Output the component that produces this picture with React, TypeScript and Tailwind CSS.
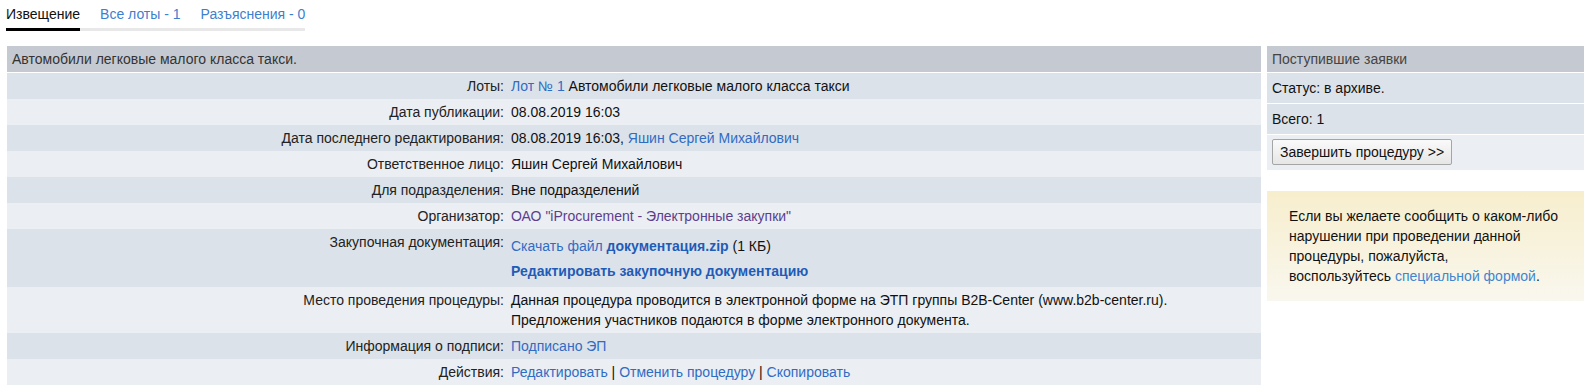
function Link({ children, className = "" }: { children: React.ReactNode; className?: string }) {
  return <a className={`text-[#2f6cc4] ${className}`}>{children}</a>;
}

function Row({
  label,
  dark,
  children,
}: {
  label: string;
  dark: boolean;
  children: React.ReactNode;
}) {
  return (
    <div className={`flex ${dark ? "bg-[#dce2e9]" : "bg-[#ebeef2]"}`}>
      <div className="w-[501px] shrink-0 py-[3px] pr-[4px] text-right text-[#222]">{label}</div>
      <div className="flex-1 py-[3px] pl-[3px] text-[#111]">{children}</div>
    </div>
  );
}

export default function App() {
  return (
    <div className="min-h-[392px] bg-white px-[6px] font-['Liberation_Sans',Arial,sans-serif] text-[14px] leading-[20px]">
      <div className="inline-flex gap-[20px] border-b-[3px] border-[#e8e8e8] pt-[4px]">
        <span className="-mb-[3px] border-b-[3px] border-black pb-[4px] text-[#111]">Извещение</span>
        <a className="pb-[4px] text-[#3d7fce]">Все лоты - 1</a>
        <a className="pb-[4px] text-[#3d7fce]">Разъяснения - 0</a>
      </div>

      <div className="mt-[15px] flex gap-[6px]">
        <div className="ml-[1px] flex-1">
          <div className="border-b border-white bg-[#c5cad2] px-[5px] py-[3px] text-[#333]">
            Автомобили легковые малого класса такси.
          </div>
          <Row label="Лоты:" dark>
            <Link>Лот № 1</Link> Автомобили легковые малого класса такси
          </Row>
          <Row label="Дата публикации:" dark={false}>
            08.08.2019 16:03
          </Row>
          <Row label="Дата последнего редактирования:" dark>
            08.08.2019 16:03, <Link>Яшин Сергей Михайлович</Link>
          </Row>
          <Row label="Ответственное лицо:" dark={false}>
            Яшин Сергей Михайлович
          </Row>
          <Row label="Для подразделения:" dark>
            Вне подразделений
          </Row>
          <Row label="Организатор:" dark={false}>
            <a className="text-[#5b3e8f]">ОАО "iProcurement - Электронные закупки"</a>
          </Row>
          <Row label="Закупочная документация:" dark>
            <div className="mt-[4px]">
              <Link>
                Скачать файл <b className="text-[#1f5cb8]">документация.zip</b>
              </Link>{" "}
              (1 КБ)
            </div>
            <div className="mb-[3px] mt-[5px]">
              <a className="font-bold text-[#1f5cb8]">Редактировать закупочную документацию</a>
            </div>
          </Row>
          <Row label="Место проведения процедуры:" dark={false}>
            Данная процедура проводится в электронной форме на ЭТП группы B2B-Center (www.b2b-center.ru).
            <br />
            Предложения участников подаются в форме электронного документа.
          </Row>
          <Row label="Информация о подписи:" dark>
            <Link>Подписано ЭП</Link>
          </Row>
          <Row label="Действия:" dark={false}>
            <Link>Редактировать</Link> | <Link>Отменить процедуру</Link> | <Link>Скопировать</Link>
          </Row>
        </div>

        <div className="w-[317px] shrink-0">
          <div className="flex flex-col gap-px bg-white">
            <div className="bg-[#c5cad2] px-[5px] py-[3px] text-[#444]">Поступившие заявки</div>
            <div className="bg-[#dce2e9] px-[5px] py-[5px] text-[#111]">Статус: в архиве.</div>
            <div className="bg-[#dce2e9] px-[5px] py-[5px] text-[#111]">Всего: 1</div>
            <div className="bg-[#ebeef2] px-[5px] pb-[5px] pt-[4px]">
              <button className="h-[26px] w-[180px] rounded-[2px] border border-[#a5a5a5] bg-gradient-to-b from-[#fafafa] to-[#e6e6e6] text-[14px] text-[#111]">
                Завершить процедуру &gt;&gt;
              </button>
            </div>
          </div>

          <div className="mt-[21px] h-[110px] bg-gradient-to-b from-[#f7eecd] to-[#f9f7ee] pl-[22px] pr-[16px] pt-[15px] text-[#111]">
            Если вы желаете сообщить о каком-либо
            <br />
            нарушении при проведении данной
            <br />
            процедуры, пожалуйста,
            <br />
            воспользуйтесь <a className="text-[#3e86cf]">специальной формой</a>.
          </div>
        </div>
      </div>
    </div>
  );
}
